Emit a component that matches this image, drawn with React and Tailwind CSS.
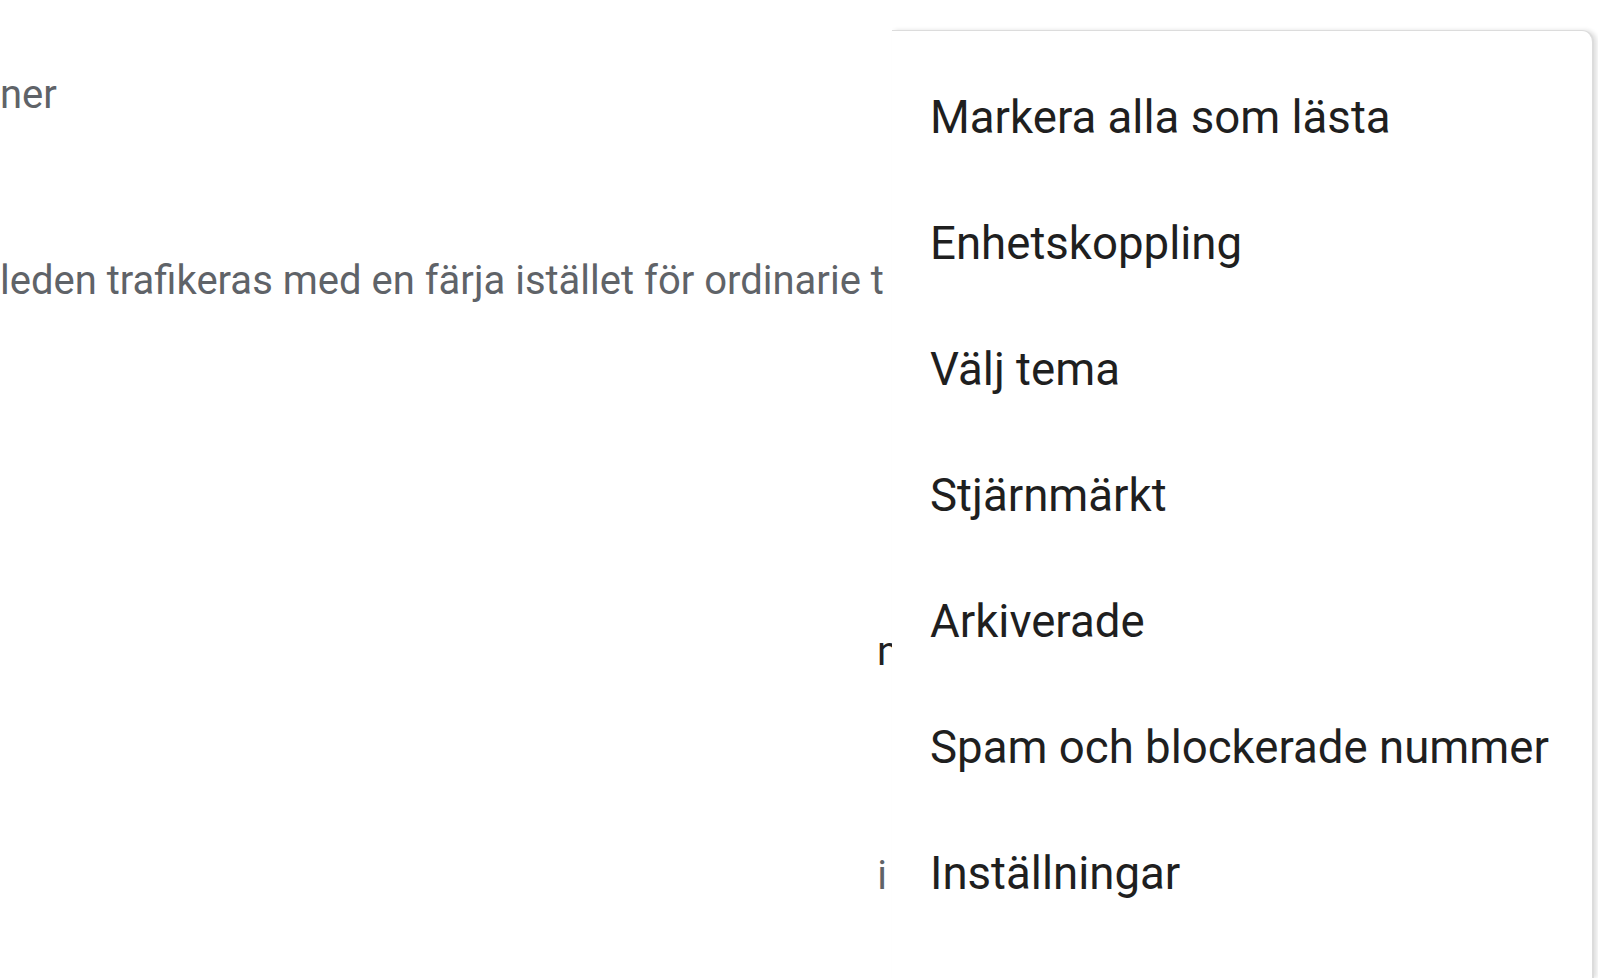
const items = [
  "Markera alla som lästa",
  "Enhetskoppling",
  "Välj tema",
  "Stjärnmärkt",
  "Arkiverade",
  "Spam och blockerade nummer",
  "Inställningar",
];

function Backdrop() {
  return (
    <div className="w-[892px] shrink-0 overflow-hidden">
      <div className="h-[70px]" />
      <div className="text-[40px] leading-[50px] text-[#5f6368] whitespace-nowrap">ner</div>
      <div className="h-[136px]" />
      <div className="text-[40px] leading-[50px] text-[#5f6368] whitespace-nowrap">
        leden trafikeras med en färja istället för ordinarie t
      </div>
      <div className="h-[321px]" />
      <div className="flex justify-end text-[40px] leading-[50px] text-[#202124] -mr-[7px]">n</div>
      <div className="h-[174px]" />
      <div className="flex justify-end text-[40px] leading-[50px] text-[#5f6368] mr-[5px]">i</div>
    </div>
  );
}

function Menu() {
  return (
    <div className="flex-1 mt-[30px] mr-[4px] bg-white border-t border-r-2 border-[#dcdcdc] rounded-tr-[12px] shadow-[3px_0_4px_rgba(0,0,0,0.12)] pt-[24px]">
      {items.map((item) => (
        <div key={item} className="h-[126px] flex items-center pl-[38px] text-[45.6px] text-[#1f1f1f] whitespace-nowrap">
          {item}
        </div>
      ))}
    </div>
  );
}

export default function App() {
  return (
    <div className="w-[1598px] h-[978px] overflow-hidden bg-white flex font-['Roboto',sans-serif]">
      <Backdrop />
      <Menu />
    </div>
  );
}
